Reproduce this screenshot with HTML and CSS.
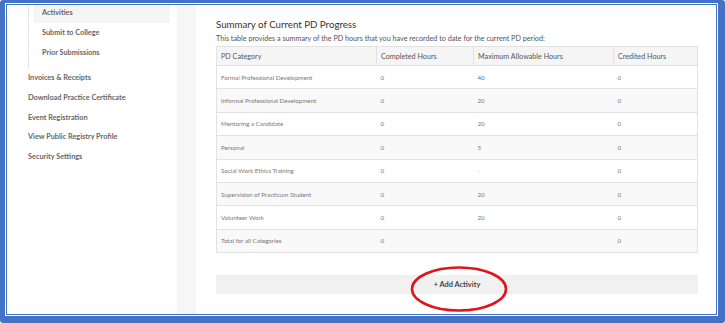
FILE: index.html
```html
<!DOCTYPE html>
<html lang="en">
<head>
  <meta charset="UTF-8" />
  <title>PD Progress</title>
  <link rel="stylesheet" href="styles.css">
</head>
<body>
  <div class="frame">
    <div class="frame-line">
      <div class="page">
        <aside class="sidebar">
          <ul class="subnav">
            <li class="active">Activities</li>
            <li>Submit to College</li>
            <li>Prior Submissions</li>
          </ul>
          <ul class="nav">
            <li>Invoices &amp; Receipts</li>
            <li>Download Practice Certificate</li>
            <li>Event Registration</li>
            <li>View Public Registry Profile</li>
            <li>Security Settings</li>
          </ul>
        </aside>

        <div class="gutter"></div>

        <main class="main">
          <h2>Summary of Current PD Progress</h2>
          <p class="lead">This table provides a summary of the PD hours that you have recorded to date for the current PD period:</p>

          <table class="progress">
            <thead>
              <tr>
                <th class="c1">PD Category</th>
                <th class="c2">Completed Hours</th>
                <th class="c3">Maximum Allowable Hours</th>
                <th>Credited Hours</th>
              </tr>
            </thead>
            <tbody>
              <tr><td>Formal Professional Development</td><td>0</td><td class="link">40</td><td>0</td></tr>
              <tr><td>Informal Professional Development</td><td>0</td><td>20</td><td>0</td></tr>
              <tr><td>Mentoring a Candidate</td><td>0</td><td>20</td><td>0</td></tr>
              <tr><td>Personal</td><td>0</td><td>5</td><td>0</td></tr>
              <tr><td>Social Work Ethics Training</td><td>0</td><td class="dash">-</td><td>0</td></tr>
              <tr><td>Supervision of Practicum Student</td><td>0</td><td>20</td><td>0</td></tr>
              <tr><td>Volunteer Work</td><td>0</td><td>20</td><td>0</td></tr>
              <tr><td>Total for all Categories</td><td>0</td><td></td><td>0</td></tr>
            </tbody>
          </table>

          <div class="add-bar">
            <span class="add-btn">+ Add Activity</span>
            <svg class="circle" width="100" height="48" viewBox="0 0 100 48">
              <ellipse cx="50" cy="24" rx="47" ry="21.5" fill="none" stroke="#e0141a" stroke-width="2.6" />
            </svg>
          </div>
        </main>
      </div>
    </div>
  </div>
</body>
</html>
```

FILE: styles.css
```css
body {
  margin: 0;
  background: #fff;
  font-family: "Lato", "Liberation Sans", sans-serif;
}

/* blue screenshot frame */
.frame {
  width: 725px;
  height: 323px;
  box-sizing: border-box;
  padding: 3px 7px 7px 5px;
  background: #4472c4;
  border-radius: 3px;
}

.frame-line {
  height: 100%;
  box-sizing: border-box;
  border: 1px solid #fff;
}

.page {
  display: flex;
  height: 100%;
  box-sizing: border-box;
  border: 1px solid #4472c4;
  background: #fff;
  overflow: hidden;
}

/* left menu */
.sidebar {
  width: 170px;
  flex: none;
  padding-right: 7px;
  box-sizing: border-box;
  margin-top: -2px;
}

.sidebar ul {
  list-style: none;
  margin: 0;
  padding: 0;
}

.sidebar li {
  font-size: 7.3px;
  font-weight: bold;
  color: #666;
  line-height: 10px;
}

.subnav {
  margin-left: 21px !important;
  border-left: 1px solid #e6e6e6;
  padding: 0 0 5px 5px !important;
}

.subnav li {
  padding: 5px 8px 5.2px;
}

.subnav li.active {
  background: #f5f5f5;
}

.nav {
  margin-left: 21px !important;
}

.nav li {
  padding: 4.8px 0;
}

.gutter {
  width: 19px;
  flex: none;
  background: #f6f6f6;
}

/* main content */
.main {
  flex: 1;
  padding: 13px 18px 0 20px;
}

.main h2 {
  margin: 0;
  font-size: 9.7px;
  font-weight: normal;
  color: #333;
  line-height: 12px;
}

.lead {
  margin: 4px 0 2px;
  font-size: 7.2px;
  color: #555;
  line-height: 10px;
}

.progress {
  width: 100%;
  border-collapse: collapse;
  border: 1px solid #e2e2e2;
}

.progress th,
.progress td {
  border: 1px solid #e2e2e2;
  text-align: left;
  padding: 0 4px;
}

.progress th {
  background: #f5f5f5;
  font-size: 7.2px;
  font-weight: normal;
  color: #555;
  height: 18px;
}

.progress td {
  font-size: 6.2px;
  color: #777;
  height: 22.4px;
  border-left: none;
  border-right: none;
}

.progress tbody tr:nth-child(even) td {
  background: #f9f9f9;
}

.progress th.c1 { width: 151px; }
.progress th.c2 { width: 88px; }
.progress th.c3 { width: 131px; }

.progress td.link { color: #4a6ea8; }
.progress td.dash { color: #aaa; }

.add-bar {
  position: relative;
  margin-top: 22px;
  height: 19px;
  background: #f1f1f1;
  display: flex;
  justify-content: center;
  align-items: center;
}

.add-btn {
  font-size: 7.4px;
  font-weight: bold;
  color: #444;
}

/* red annotation ellipse */
.circle {
  position: absolute;
  left: 193px;
  top: -10px;
}
```
